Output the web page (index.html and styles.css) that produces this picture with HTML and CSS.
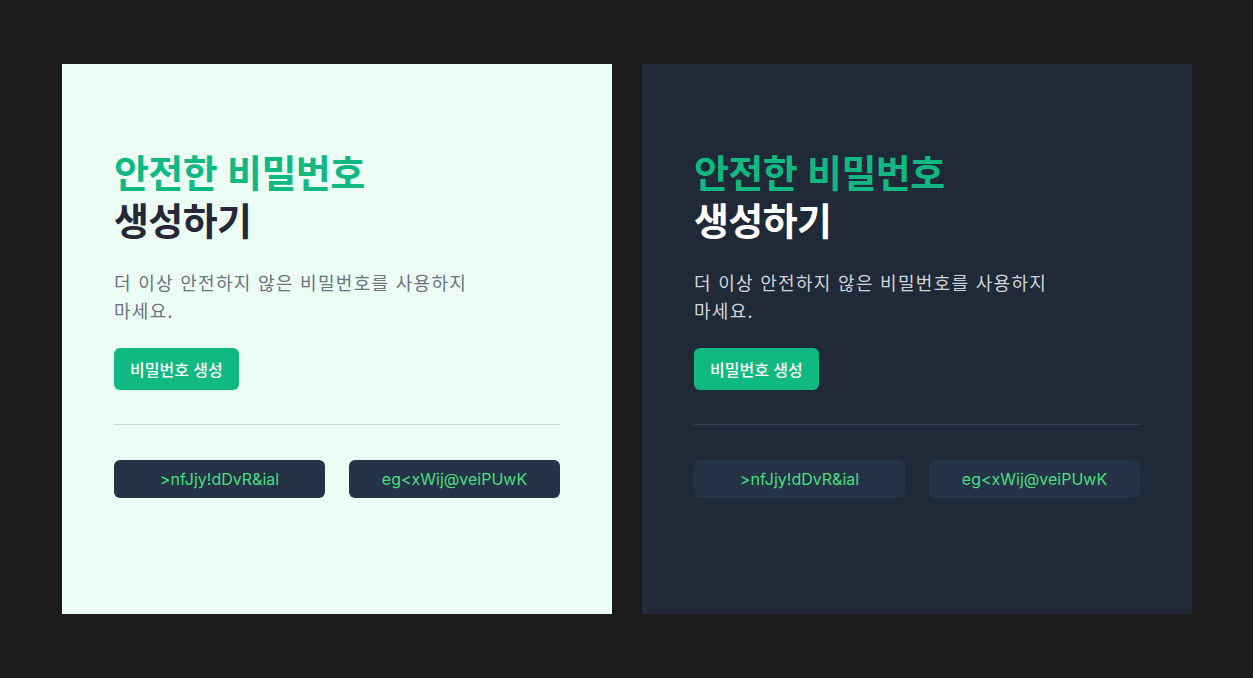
FILE: index.html
```html
<!DOCTYPE html>
<html lang="ko">
<head>
<meta charset="utf-8">
<title>안전한 비밀번호 생성하기</title>
<link rel="stylesheet" href="styles.css">
</head>
<body>
<main class="stage">
  <section class="card card-light">
    <h1 class="title"><span class="accent">안전한 비밀번호</span><br>생성하기</h1>
    <p class="desc">더 이상 안전하지 않은 비밀번호를 사용하지 마세요.</p>
    <button class="btn" type="button">비밀번호 생성</button>
    <hr class="divider">
    <div class="chips">
      <div class="chip">&gt;nfJjy!dDvR&amp;ial</div>
      <div class="chip">eg&lt;xWij@veiPUwK</div>
    </div>
  </section>
  <section class="card card-dark">
    <h1 class="title"><span class="accent">안전한 비밀번호</span><br>생성하기</h1>
    <p class="desc">더 이상 안전하지 않은 비밀번호를 사용하지 마세요.</p>
    <button class="btn" type="button">비밀번호 생성</button>
    <hr class="divider">
    <div class="chips">
      <div class="chip">&gt;nfJjy!dDvR&amp;ial</div>
      <div class="chip">eg&lt;xWij@veiPUwK</div>
    </div>
  </section>
</main>
</body>
</html>
```
FILE: styles.css
```css
* { box-sizing: border-box; }
html, body { margin: 0; padding: 0; }
body {
  background: #1b1b1b;
  font-family: Inter, "Noto Sans CJK KR", "Noto Sans", sans-serif;
  width: 1253px;
  height: 678px;
  overflow: hidden;
}
.stage {
  display: flex;
  gap: 30px;
  padding: 64px 0 0 62px;
}
.card {
  width: 550px;
  height: 550px;
  padding: 83px 52px 52px;
  display: flex;
  flex-direction: column;
  align-items: flex-start;
}
.card-light { background: #ecfdf5; }
.card-dark { background: #1f2937; }
.title {
  margin: 0;
  font-size: 38px;
  line-height: 48px;
  font-weight: 700;
  letter-spacing: -0.6px;
  font-family: "Noto Sans CJK KR", sans-serif;
}
.accent { color: #10b981; }
.card-light .title { color: #262838; }
.card-dark .title { color: #ffffff; }
.desc {
  margin: 25px 0 0;
  max-width: 384px;
  word-break: keep-all;
  font-size: 18px;
  line-height: 28px;
  letter-spacing: 1.3px;
  font-family: "Noto Sans CJK KR", sans-serif;
}
.card-light .desc { color: #6b7280; }
.card-dark .desc { color: #d1d5db; }
.btn {
  margin-top: 24px;
  height: 42px;
  padding: 0 16px;
  border: 0;
  border-radius: 6px;
  background: #10b981;
  color: #ffffff;
  font-family: "Noto Sans CJK KR", sans-serif;
  font-size: 16px;
  font-weight: 500;
}
.divider {
  align-self: stretch;
  margin: 34px 0 0;
  border: 0;
  height: 1px;
}
.card-light .divider { background: #d4d4dc; }
.card-dark .divider { background: #344154; }
.chips {
  align-self: stretch;
  margin-top: 35px;
  display: grid;
  grid-template-columns: 1fr 1fr;
  gap: 24px;
}
.chip {
  height: 38px;
  border-radius: 6px;
  background: #253347;
  color: #4ade80;
  font-family: Inter, sans-serif;
  font-size: 16px;
  display: flex;
  align-items: center;
  justify-content: center;
}
```
